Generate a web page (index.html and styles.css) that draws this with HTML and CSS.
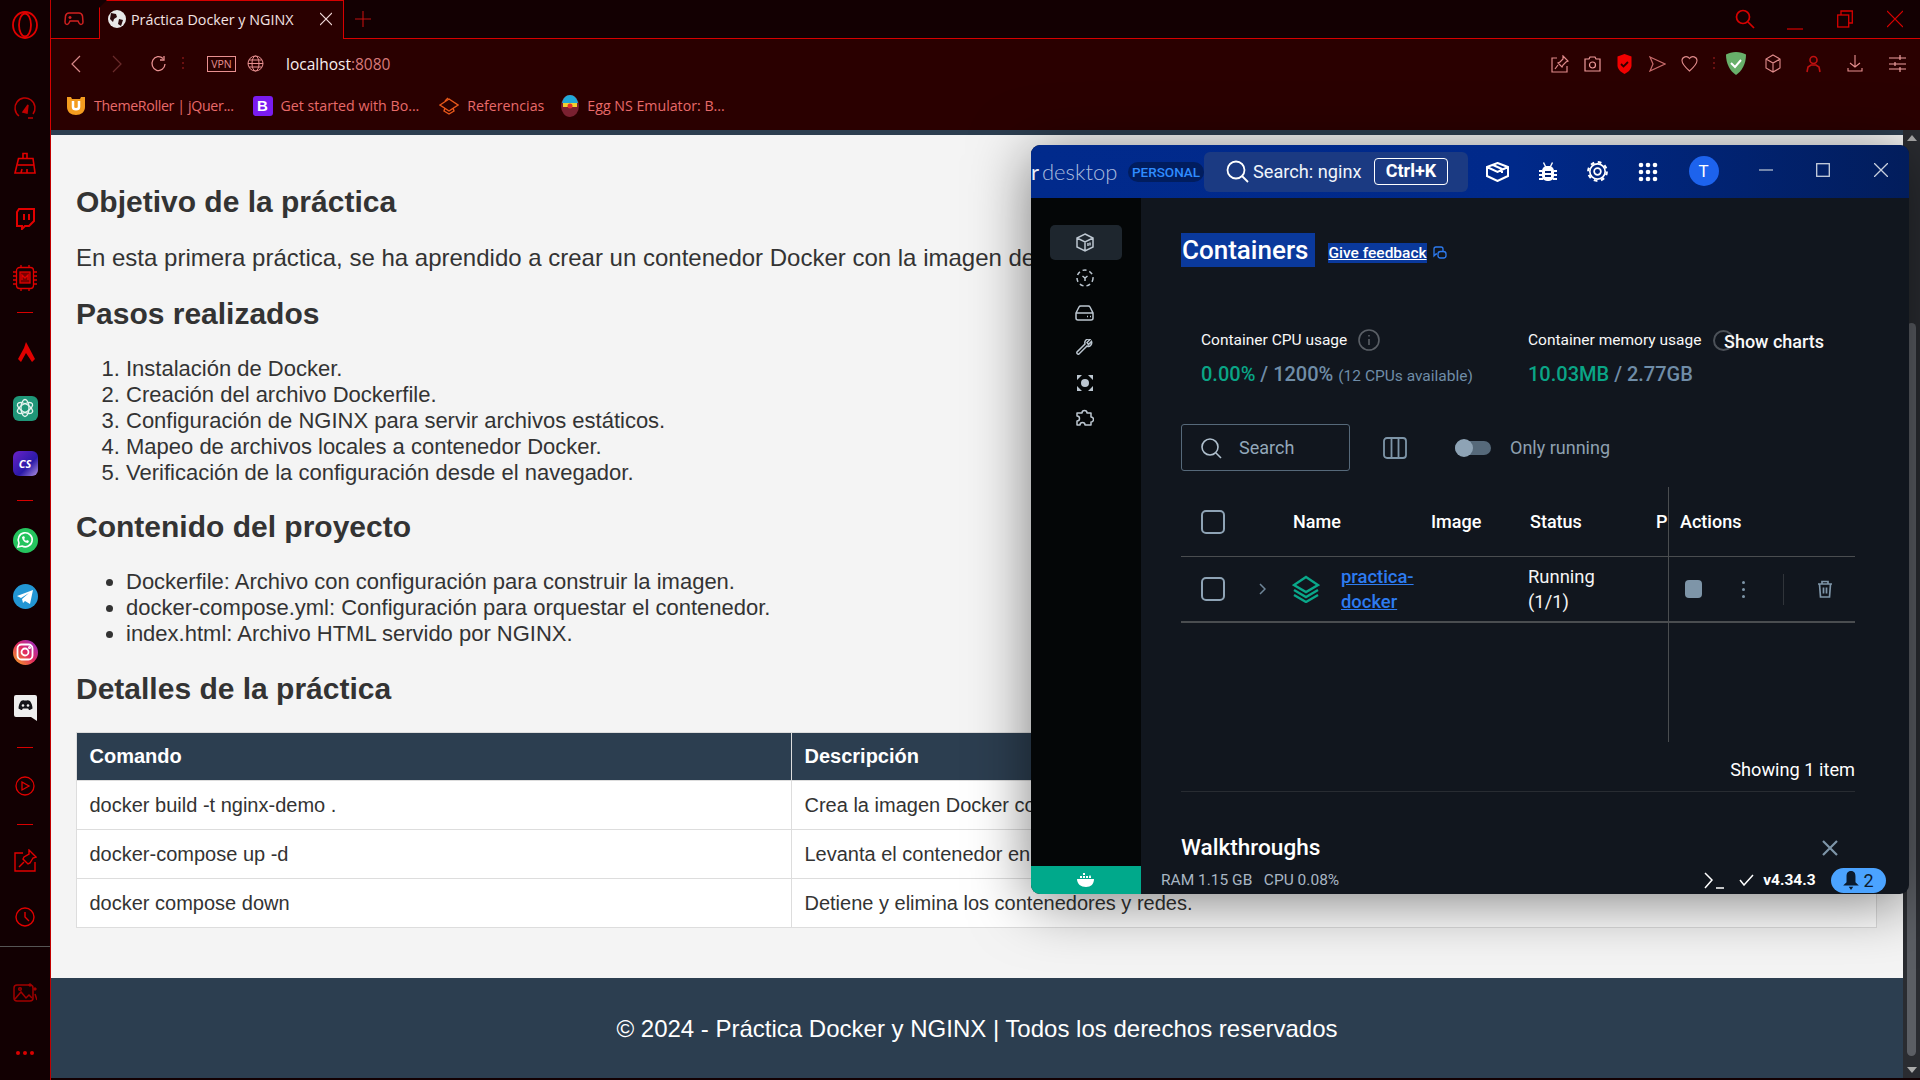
FILE: index.html
```html
<!DOCTYPE html>
<html lang="es">
<head>
<meta charset="utf-8">
<title>Práctica Docker y NGINX</title>
<link rel="stylesheet" href="styles.css">
</head>
<body>
<div class="browser">
  <aside class="rail">
    <div class="rail-logo"><svg width="30" height="32" viewBox="0 0 30 32" fill="none" stroke="#e00000" stroke-width="1.8"><ellipse cx="15" cy="16" rx="12" ry="13"/><ellipse cx="15" cy="16" rx="6" ry="11.5"/></svg></div>
    <div class="rail-item"><svg width="24" height="24" viewBox="0 0 24 24" fill="none" stroke="#c00000" stroke-width="1.5"><path d="M6 20a10 10 0 1 1 14-2"/><path d="M10 16l5-7-1 8z" fill="#c00000"/><path d="M15 22h5"/></svg></div>
    <div class="rail-item"><svg width="22" height="22" viewBox="0 0 22 22" fill="none" stroke="#e00000" stroke-width="1.6"><path d="M9 6V1.500h4V6"/><path d="M4.500 6.500h14.500l2 14.500H1z"/><path d="M3.500 13h16.500"/><path d="M7 21l1-4M13 21l0-4"/></svg></div>
    <div class="rail-item"><svg width="20" height="22" viewBox="0 0 20 22" fill="none" stroke="#e00000" stroke-width="2"><path d="M2 4l2-3h15v12l-5 5h-4l-3 3v-3H2z"/><path d="M9 6v6M14 6v6"/></svg></div>
    <div class="rail-item rail-item-cpu"><svg width="26" height="26" viewBox="0 0 26 26" fill="none" stroke="#e00000" stroke-width="1.3"><rect x="4.500" y="2.500" width="17" height="21" rx="3"/><rect x="8" y="7" width="10" height="11" fill="#7a0000"/><path d="M10 15v-5l3 3 3-3v5"/><path d="M1 7h3M1 11h3M1 15h3M1 19h3M22 7h3M22 11h3M22 15h3M22 19h3M9 0v2.500M17 0v2.500M9 24v2M17 24v2"/></svg></div>
    <div class="rail-sep"></div>
    <div class="rail-item"><svg width="20" height="21" viewBox="0 0 20 21" fill="#e00000"><path d="M11 0l9 17-3 3-6-9-5 9-3-3 6-11z"/></svg></div>
    <div class="rail-item"><div class="app app-gpt"><svg width="20" height="20" viewBox="0 0 20 20" fill="none" stroke="#e8f4f0" stroke-width="1.300"><ellipse cx="10" cy="10" rx="4" ry="8.500"/><ellipse cx="10" cy="10" rx="4" ry="8.500" transform="rotate(60 10 10)"/><ellipse cx="10" cy="10" rx="4" ry="8.500" transform="rotate(120 10 10)"/></svg></div></div>
    <div class="rail-item"><div class="app app-cs"><span>CS</span></div></div>
    <div class="rail-sep rail-sep-2"></div>
    <div class="rail-item"><div class="app app-wa"><svg width="18" height="18" viewBox="0 0 18 18" fill="none" stroke="#fff" stroke-width="1.6"><path d="M2 16l1-4a7 7 0 1 1 3 3z"/><path d="M6 6c0 3 3 6 6 6l1-2-2-1-1 1-2-2 1-1-1-2z" fill="#fff" stroke="none"/></svg></div></div>
    <div class="rail-item rail-item-tg"><div class="app app-tg"><svg width="18" height="16" viewBox="0 0 18 16" fill="#fff"><path d="M1 7L17 1l-3 14-5-3-2 2-1-4 7-6-8 5z"/></svg></div></div>
    <div class="rail-item"><div class="app app-ig"><svg width="18" height="18" viewBox="0 0 18 18" fill="none" stroke="#fff" stroke-width="1.8"><rect x="1.500" y="1.500" width="15" height="15" rx="4"/><circle cx="9" cy="9" r="3.500"/><circle cx="13.500" cy="4.500" r=".6"/></svg></div></div>
    <div class="rail-item"><svg width="23" height="26" viewBox="0 0 23 26"><path d="M2 0h19a2 2 0 0 1 2 2v24l-6-4H2a2 2 0 0 1-2-2V2a2 2 0 0 1 2-2z" fill="#eee"/><path d="M7 6c1.500-.8 2.500-.8 3-.4h3c.5-.4 1.500-.4 3 .4 1.800 2.500 2.500 5 2.500 7.500-1 .9-2.500 1.500-3.500 1.500l-.8-1.500H8.800L8 15c-1 0-2.500-.6-3.500-1.500C4.500 11 5.200 8.500 7 6z" fill="#14151a"/><circle cx="9" cy="10.500" r="1.300" fill="#eee"/><circle cx="14" cy="10.500" r="1.300" fill="#eee"/></svg></div>
    <div class="rail-sep rail-sep-mid"></div>
    <div class="rail-item"><svg width="20" height="20" viewBox="0 0 20 20" fill="none" stroke="#e00000" stroke-width="1.300"><circle cx="10" cy="10" r="9"/><path d="M7 6l7 4-7 4z"/></svg></div>
    <div class="rail-sep rail-sep-3"></div>
    <div class="rail-item"><svg width="24" height="24" viewBox="0 0 24 24" fill="none" stroke="#e00000" stroke-width="1.400"><path d="M10 4H2v18h20v-9"/><path d="M16 1l7 7-3 1-3 5-2 1-5-5 1-2 5-3z"/><path d="M11 13l-5 5"/></svg></div>
    <div class="rail-item rail-item-clock"><svg width="20" height="20" viewBox="0 0 20 20" fill="none" stroke="#e00000" stroke-width="1.400"><circle cx="10" cy="10" r="9"/><path d="M10 5v5l4 4"/></svg></div>
    <div class="rail-line"></div>
    <div class="rail-item rail-item-image"><svg width="24" height="20" viewBox="0 0 24 20" fill="none" stroke="#a00000" stroke-width="1.500"><rect x="1" y="3" width="19" height="16" rx="3"/><path d="M2 17l6-7 5 6 3-3 3 3M22 12l2 6"/><circle cx="7" cy="7" r="1.300"/><path d="M17 2l1 1-1 1-1-1zM22 6l1 1-1 1-1-1z" fill="#a00000"/></svg></div>
    <div class="rail-dots"><i></i><i></i><i></i></div>
  </aside>

  <div class="shell">
    <div class="tabstrip">
      <span class="strip-game"><svg width="20" height="16" viewBox="0 0 20 16" fill="none" stroke="#d02020" stroke-width="1.500"><path d="M5 2h10c2 0 3 1 3.500 3l.5 6c0 3-3 3-4 1l-1-2H6l-1 2c-1 2-4 2-4-1l.5-6C2 3 3 2 5 2z"/><path d="M6 5v3M4.500 6.500h3"/></svg></span>
      <div class="tab">
        <svg class="tab-fav" width="18" height="18" viewBox="0 0 18 18"><circle cx="9" cy="9" r="9" fill="#e8e8e8"/><path d="M3 3l5 1 1 3-3 2-1 3-3-3zM11 9l4 1-2 6-3-2z" fill="#2a0a0c"/></svg>
        <span class="tab-title">Práctica Docker y NGINX</span>
        <svg class="tab-close" width="12" height="14" viewBox="0 0 12 14" stroke="#f0d8d8" stroke-width="1.100"><path d="M0 1l12 12M12 1L0 13"/></svg>
      </div>
      <svg class="tab-new" width="16" height="16" viewBox="0 0 16 16" stroke="#c01010" stroke-width="1.100"><path d="M8 0v16M0 8h16"/></svg>
      <div class="strip-controls">
        <svg class="ctl-search" width="20" height="20" viewBox="0 0 20 20" fill="none" stroke="#d80000" stroke-width="1.700"><circle cx="8" cy="8" r="6.500"/><path d="M13 13l6 6"/></svg>
        <svg class="ctl-min" width="16" height="14" viewBox="0 0 16 14" stroke="#d80000" stroke-width="1.200"><path d="M0 13h16"/></svg>
        <svg width="16" height="18" viewBox="0 0 16 18" fill="none" stroke="#d80000" stroke-width="1.300"><rect x=".7" y="5" width="11" height="12"/><path d="M4 5V1h11.300v12H12"/></svg>
        <svg width="16" height="18" viewBox="0 0 16 18" stroke="#d80000" stroke-width="1.200"><path d="M0 1l16 16M16 1L0 17"/></svg>
      </div>
    </div>
    <div class="toolbar">
      <div class="addr">
        <svg class="nav nav-back" width="10" height="18" viewBox="0 0 10 18" fill="none" stroke="#d88888" stroke-width="1.200"><path d="M9 1L1 9l8 8"/></svg>
        <svg class="nav nav-fwd" width="10" height="18" viewBox="0 0 10 18" fill="none" stroke="#6a2a2a" stroke-width="1.200"><path d="M1 1l8 8-8 8"/></svg>
        <svg class="nav nav-reload" width="17" height="18" viewBox="0 0 17 18" fill="none" stroke="#e89090" stroke-width="1.300"><path d="M15 9a6.500 7 0 1 1-2-5.500"/><path d="M14 1v4h-4" /></svg>
        <span class="nav-dots"></span>
        <span class="vpn">VPN</span>
        <svg class="globe" width="17" height="17" viewBox="0 0 17 17" fill="none" stroke="#e89090" stroke-width="1"><circle cx="8.500" cy="8.500" r="7.500"/><ellipse cx="8.500" cy="8.500" rx="3.500" ry="7.500"/><path d="M1 8.500h15M2 5h13M2 12h13"/></svg>
        <span class="url">localhost<em>:8080</em></span>
        <div class="tools">
          <svg width="18" height="18" viewBox="0 0 18 18" fill="none" stroke="#e08a8a" stroke-width="1.200"><path d="M6 3H1v14h15v-6"/><path d="M12 1l5 5-2 1-3 3-1 2-4-4 2-1 3-3zM7 10l-3 4"/></svg>
          <svg width="17" height="16" viewBox="0 0 17 16" fill="none" stroke="#f09a9a" stroke-width="1.200"><path d="M1 3h4l1-2h5l1 2h4v12H1z"/><circle cx="8.500" cy="9" r="3"/></svg>
          <svg class="tool-shield" width="15" height="20" viewBox="0 0 15 20"><path d="M7.500 0l7 2.500v9c0 4-4 7-7 8.500-3-1.500-7-4.500-7-8.500v-9z" fill="#f20000"/><path d="M4 10l2.500 2.500L11 8" fill="none" stroke="#300" stroke-width="1.800"/></svg>
          <svg class="tool-send" width="17" height="16" viewBox="0 0 17 16" fill="none" stroke="#c86a6a" stroke-width="1.200"><path d="M1 1l15 7-15 7 3-7z"/></svg>
          <svg width="17" height="17" viewBox="0 0 17 17" fill="none" stroke="#e08a8a" stroke-width="1.100"><path d="M8.500 16C4 12 1 9 1 5.500 1 2 6 0 8.500 3.500 11 0 16 2 16 5.500 16 9 13 12 8.500 16z"/></svg>
          <span class="tool-dots"></span>
          <svg class="tool-adguard" width="20" height="23" viewBox="0 0 20 23"><path d="M10 0c4 0 7 1 10 2.500C20 12 16 19 10 23 4 19 0 12 0 2.500 3 1 6 0 10 0z" fill="#68b06a"/><path d="M5 11l4 4 6-7" fill="none" stroke="#fff" stroke-width="2"/></svg>
          <svg class="tool-cube" width="16" height="19" viewBox="0 0 16 19" fill="none" stroke="#e08a8a" stroke-width="1.100"><path d="M8 1l7 4v9l-7 4-7-4V5zM1 5l7 4 7-4M8 9v9"/></svg>
          <svg class="tool-user" width="15" height="18" viewBox="0 0 15 18" fill="none" stroke="#c01010" stroke-width="1.600"><circle cx="7.500" cy="5" r="3.500"/><path d="M1 17l1-5 3-2h5l3 2 1 5"/></svg>
          <svg class="tool-wide" width="16" height="17" viewBox="0 0 16 17" fill="none" stroke="#e89090" stroke-width="1.100"><path d="M8 0v12M3 8l5 4 5-4M1 13v3h14v-3"/></svg>
          <svg class="tool-wide" width="17" height="17" viewBox="0 0 17 17" fill="none" stroke="#f0a0a0" stroke-width="1.200"><path d="M0 3h17M0 9h17M0 14h17M11 0v5M6 7v4M11 12v5"/></svg>
        </div>
      </div>
      <div class="bookmarks">
        <span class="bm bm-1"><svg width="20" height="20" viewBox="0 0 20 20"><path d="M1 1h4l1 2h8l1-2h4v10c0 5-4 8-9 8s-9-3-9-8z" fill="#f39c1f"/><path d="M7 5v6c0 3 6 3 6 0V5" fill="none" stroke="#fff" stroke-width="2.500"/></svg><span class="bm-text">ThemeRoller | jQuer...</span></span>
        <span class="bm bm-2"><span class="bm-b">B</span><span class="bm-text">Get started with Bo...</span></span>
        <span class="bm bm-3"><svg width="20" height="20" viewBox="0 0 20 20" fill="none" stroke="#e8581a" stroke-width="1.400"><path d="M1 9l9-6 9 6-9 6z"/><path d="M9 2l-3 3M6 12l-1 3 5 3 5-3-1-3"/></svg><span class="bm-text">Referencias</span></span>
        <span class="bm bm-4"><svg width="18" height="22" viewBox="0 0 18 22"><ellipse cx="9" cy="11" rx="9" ry="11" fill="#7a2030"/><path d="M1 8C2 3 5 0 9 0s7 3 8 8z" fill="#20a8d8"/><rect x="2" y="8" width="14" height="4" fill="#f0d030"/><circle cx="9" cy="11" r="2.500" fill="#e03030"/></svg><span class="bm-text">Egg NS Emulator: B...</span></span>
      </div>
    </div>
    <div class="viewport">
      <main class="page">
        <div class="page-strip"></div>
        <section class="article">
          <h2>Objetivo de la práctica</h2>
          <p>En esta primera práctica, se ha aprendido a crear un contenedor Docker con la imagen de NGINX.</p>
          <h2>Pasos realizados</h2>
          <ol>
            <li>Instalación de Docker.</li>
            <li>Creación del archivo Dockerfile.</li>
            <li>Configuración de NGINX para servir archivos estáticos.</li>
            <li>Mapeo de archivos locales a contenedor Docker.</li>
            <li>Verificación de la configuración desde el navegador.</li>
          </ol>
          <h2>Contenido del proyecto</h2>
          <ul>
            <li>Dockerfile: Archivo con configuración para construir la imagen.</li>
            <li>docker-compose.yml: Configuración para orquestar el contenedor.</li>
            <li>index.html: Archivo HTML servido por NGINX.</li>
          </ul>
          <h2>Detalles de la práctica</h2>
          <table>
            <thead><tr><th class="col-cmd">Comando</th><th>Descripción</th></tr></thead>
            <tbody>
              <tr><td>docker build -t nginx-demo .</td><td>Crea la imagen Docker con NGINX.</td></tr>
              <tr><td>docker-compose up -d</td><td>Levanta el contenedor en segundo plano.</td></tr>
              <tr><td>docker compose down</td><td>Detiene y elimina los contenedores y redes.</td></tr>
            </tbody>
          </table>
        </section>
        <footer class="page-footer">© 2024 - Práctica Docker y NGINX | Todos los derechos reservados</footer>
      </main>
      <div class="scrollbar">
        <svg class="sb-arrow" width="10" height="6" viewBox="0 0 10 6" fill="#aaa"><path d="M5 0l5 6H0z"/></svg>
        <div class="sb-thumb"></div>
        <svg class="sb-arrow" width="10" height="6" viewBox="0 0 10 6" fill="#aaa"><path d="M5 6l5-6H0z"/></svg>
      </div>
    </div>
  </div>

  <div class="dd-window">
    <header class="dd-head">
      <span class="dd-logo"><b>r</b> desktop</span>
      <span class="dd-plan">PERSONAL</span>
      <div class="dd-search">
        <svg width="23" height="23" viewBox="0 0 23 23" fill="none" stroke="#fff" stroke-width="1.800"><circle cx="10" cy="10" r="8.500"/><path d="M16 16l6 6"/></svg>
        <span class="dd-search-text">Search: nginx</span>
        <span class="dd-kbd">Ctrl+K</span>
      </div>
      <div class="dd-head-icons">
        <svg width="23" height="20" viewBox="0 0 23 20" fill="none" stroke="#fff" stroke-width="2"><path d="M11.500 1L22 5v9l-10.500 5L1 14V5zM1 5l10.500 5L22 5M7 3l9 4v4"/></svg>
        <svg width="18" height="20" viewBox="0 0 18 20" fill="#fff"><rect x="3" y="4" width="12" height="15" rx="5"/><path d="M5 0l2 4h4l2-4 1 1-2 4H6L4 1zM0 8h3v2H0zM15 8h3v2h-3zM0 12h3v2H0zM15 12h3v2h-3zM0 16h4v2H0zM14 16h4v2h-4z"/><path d="M6 9h6v2H6zM6 13h6v2H6z" fill="#02226e"/></svg>
        <svg width="23" height="23" viewBox="0 0 24 24" fill="none" stroke="#fff"><circle cx="12" cy="12" r="3.500" stroke-width="1.800"/><circle cx="12" cy="12" r="8" stroke-width="1.700"/><circle cx="12" cy="12" r="9.700" stroke-width="2.300" stroke-dasharray="3.810 3.810"/></svg>
        <svg class="dd-ic-grid" width="20" height="20" viewBox="0 0 20 20" fill="#fff"><circle cx="3" cy="3" r="2.300"/><circle cx="10" cy="3" r="2.300"/><circle cx="17" cy="3" r="2.300"/><circle cx="3" cy="10" r="2.300"/><circle cx="10" cy="10" r="2.300"/><circle cx="17" cy="10" r="2.300"/><circle cx="3" cy="17" r="2.300"/><circle cx="10" cy="17" r="2.300"/><circle cx="17" cy="17" r="2.300"/></svg>
        <span class="dd-avatar">T</span>
      </div>
      <div class="dd-win">
        <svg width="14" height="14" viewBox="0 0 14 14" stroke="#9aa8c0" stroke-width="1.400"><path d="M0 7h14"/></svg>
        <svg width="14" height="14" viewBox="0 0 14 14" fill="none" stroke="#c8d0de" stroke-width="1.300"><rect x=".7" y=".7" width="12.600" height="12.600"/></svg>
        <svg class="dd-win-close" width="14" height="14" viewBox="0 0 14 14" stroke="#c8d0de" stroke-width="1.300"><path d="M0 0l14 14M14 0L0 14"/></svg>
      </div>
    </header>
    <div class="dd-body">
      <nav class="dd-nav">
        <a class="dd-nav-item is-active"><svg width="18" height="19" viewBox="0 0 18 19" fill="none" stroke="#bcc6d0" stroke-width="1.500"><path d="M9 1l8 4v9l-8 4-8-4V5zM1 5l8 4 8-4M9 9v9"/><path d="M12 10v3M14 9.500v3" /></svg></a>
        <a class="dd-nav-item"><svg width="18" height="18" viewBox="0 0 18 18" fill="none" stroke="#bcc6d0" stroke-width="1.500"><circle cx="9" cy="9" r="8" stroke-dasharray="4 3"/><path d="M6.500 7L9 9l2.500-2M9 9v3"/></svg></a>
        <a class="dd-nav-item"><svg width="19" height="16" viewBox="0 0 19 16" fill="none" stroke="#bcc6d0" stroke-width="1.500"><path d="M1 8l3-6a2 2 0 0 1 2-1h7a2 2 0 0 1 2 1l3 6v5a2 2 0 0 1-2 2H3a2 2 0 0 1-2-2zM1 8h17"/><path d="M12 11.500h1M15 11.500h1"/></svg></a>
        <a class="dd-nav-item"><svg width="18" height="18" viewBox="0 0 18 18" fill="none" stroke="#bcc6d0" stroke-width="1.500"><path d="M11 7l-8 8a1.500 1.500 0 0 1-2-2l8-8c-1-3 2-6 5-4.500l-3 3 1.500 2 3-3c1 3-2 6-4.500 4.500z"/></svg></a>
        <a class="dd-nav-item"><svg width="18" height="18" viewBox="0 0 18 18" fill="#bcc6d0"><circle cx="9" cy="9" r="4"/><path d="M1 1h5L1 6zM17 1h-5l5 5zM1 17h5l-5-5zM17 17h-5l5-5z"/></svg></a>
        <a class="dd-nav-item"><svg width="19" height="18" viewBox="0 0 19 18" fill="none" stroke="#bcc6d0" stroke-width="1.500" stroke-linejoin="round"><path d="M7 4a2.500 2.500 0 1 1 5 0h4v4a2.500 2.500 0 1 1 0 5v3H10a2.500 2.500 0 1 0-5 0H2v-4a2.500 2.500 0 1 0 0-5V4z"/></svg></a>
      </nav>
      <section class="dd-main">
        <div class="dd-title-row">
          <h1 class="dd-title">Containers</h1>
          <a class="dd-feedback">Give feedback</a>
          <svg width="14" height="14" viewBox="0 0 14 14" fill="none" stroke="#2d7bf0" stroke-width="1.300"><path d="M1 3a2 2 0 0 1 2-2h5a2 2 0 0 1 2 2v2M4 8H3L1 10V3"/><rect x="5" y="5.500" width="8" height="6.500" rx="2.500"/></svg>
        </div>
        <div class="dd-stats">
          <div class="dd-stat dd-stat-cpu">
            <div class="dd-stat-label">Container CPU usage <svg class="dd-info" width="22" height="22" viewBox="0 0 22 22" fill="none" stroke="#5a5f66" stroke-width="1.600"><circle cx="11" cy="11" r="10"/><path d="M11 10v6M11 6v1.500"/></svg></div>
            <div class="dd-stat-val"><b>0.00%</b> / 1200% <small>(12 CPUs available)</small></div>
          </div>
          <div class="dd-stat dd-stat-mem">
            <div class="dd-stat-label">Container memory usage <span class="dd-ring"></span><span class="dd-show">Show charts</span></div>
            <div class="dd-stat-val"><b>10.03MB</b> / 2.77GB</div>
          </div>
        </div>
        <div class="dd-filter">
          <div class="dd-input"><svg width="22" height="22" viewBox="0 0 22 22" fill="none" stroke="#b0c0ce" stroke-width="1.600"><circle cx="10" cy="10" r="8"/><path d="M16 16l5 5"/></svg><span>Search</span></div>
          <svg class="dd-cols" width="24" height="24" viewBox="0 0 24 24" fill="none" stroke="#7e95a8" stroke-width="1.800"><rect x="1" y="2" width="22" height="20" rx="3"/><path d="M8.500 2v20M15.500 2v20"/></svg>
          <span class="dd-toggle"><i></i></span>
          <span class="dd-only">Only running</span>
        </div>
        <div class="dd-table">
          <div class="dd-thead">
            <span class="dd-check"></span>
            <span class="th th-name">Name</span>
            <span class="th th-image">Image</span>
            <span class="th th-status">Status</span>
            <span class="th th-port">P</span>
            <span class="th">Actions</span>
          </div>
          <div class="dd-row">
            <span class="dd-check"></span>
            <svg class="dd-chev" width="7" height="12" viewBox="0 0 7 12" fill="none" stroke="#6f8699" stroke-width="1.500"><path d="M1 1l5 5-5 5"/></svg>
            <svg class="dd-stack" width="28" height="28" viewBox="0 0 28 28" fill="none" stroke="#0aa88a" stroke-width="2.400"><path d="M14 2l12 8-12 7-12-7z"/><path d="M2 15l12 7 12-7"/><path d="M2 20l12 7 12-7"/></svg>
            <a class="dd-name">practica-<br>docker</a>
            <span class="dd-status">Running<br>(1/1)</span>
            <span class="dd-stop"></span>
            <span class="dd-kebab"><i></i><i></i><i></i></span>
            <span class="dd-vsep"></span>
            <svg class="dd-trash" width="16" height="18" viewBox="0 0 16 18" fill="none" stroke="#7e95a8" stroke-width="1.700"><path d="M1 4h14M5 4V1.500h6V4M2.500 4l1 13h9l1-13M6.500 7.500v6M9.500 7.500v6"/></svg>
          </div>
          <span class="dd-vline"></span>
        </div>
        <div class="dd-count">Showing 1 item</div>
        <div class="dd-walk"><span class="dd-walk-title">Walkthroughs</span><svg width="16" height="16" viewBox="0 0 16 16" stroke="#7e95a8" stroke-width="2.200"><path d="M1 1l14 14M15 1L1 15"/></svg></div>
      </section>
    </div>
    <footer class="dd-foot">
      <span class="dd-whale"><svg width="18" height="16" viewBox="0 0 18 16" fill="#fff"><path d="M6 1h2v2H6zM3 4h2v2H3zM6 4h2v2H6zM9 4h2v2H9zM0 7h17c0 5-3 8-8 8-5 0-9-3-9-8z"/><path d="M13 3c1 1 1 2 1 3h-2c0-1 0-2 1-3z"/></svg></span>
      <span class="dd-res">RAM 1.15 GB&nbsp;&nbsp; CPU 0.08%</span>
      <svg class="dd-term" width="20" height="17" viewBox="0 0 20 17" fill="none" stroke="#fff" stroke-width="1.500"><path d="M1 1l7 7-7 8M12 16h8"/></svg>
      <svg class="dd-tick" width="15" height="12" viewBox="0 0 15 12" fill="none" stroke="#fff" stroke-width="1.500"><path d="M1 6l4 5L14 1"/></svg>
      <span class="dd-ver">v4.34.3</span>
      <span class="dd-bell"><svg width="16" height="19" viewBox="0 0 14 17" fill="#0b1b2e"><path d="M7 0c3 0 4 2 4 5v5l3 3H0l3-3V5c0-3 1-5 4-5zM5 14h4l-2 3z"/></svg><span>2</span></span>
    </footer>
  </div>
</div>
</body>
</html>
```
FILE: styles.css
```css
* { box-sizing: border-box; }
html, body { margin: 0; height: 100%; overflow: hidden; }
body { background: #120002; font-family: "Liberation Sans", Arial, sans-serif; }

.browser { position: relative; display: flex; width: 1920px; height: 1080px; }

/* left rail */
.rail { width: 51px; flex: none; display: flex; flex-direction: column; align-items: center; background: #120002; border-right: 1px solid #c00000; padding-top: 9px; }
.rail-logo { height: 71px; }
.rail-item { height: 55.500px; flex: none; display: flex; align-items: center; justify-content: center; }
.rail-item-cpu { margin-top: 4px; }
.rail-item-tg { margin-top: 1px; }
.rail-item-clock { margin-top: 1px; }
.rail-item-image { margin-top: 17px; }
.rail-sep { flex: none; width: 16px; height: 1px; background: #d80000; margin: 6px 0 12px; }
.rail-sep-2 { margin-top: 8px; }
.rail-sep-mid { margin: 11px 0 11px; }
.rail-sep-3 { margin: 10px 0 8px; }
.rail-line { flex: none; width: 50px; height: 1px; background: #555; margin-top: 1px; }
.rail-dots { margin-top: 31px; display: flex; gap: 3px; }
.rail-dots i { width: 4px; height: 4px; border-radius: 50%; background: #d80000; }
.app { width: 25px; height: 25px; border-radius: 50%; display: flex; align-items: center; justify-content: center; }
.app-gpt { background: #1f9678; border-radius: 6px; }
.app-cs { background: linear-gradient(135deg, #6a22c8, #2a1aa8 60%, #b090e0); border-radius: 6px; color: #fff; font: italic 700 11px "Open Sans", sans-serif; }
.app-wa { background: #25c45e; }
.app-tg { background: #2296d4; }
.app-ig { background: linear-gradient(45deg, #f8b020, #e02a60 50%, #9030d0); }

.shell { flex: 1; min-width: 0; display: flex; flex-direction: column; padding-bottom: 2px; }

/* tab strip */
.tabstrip { height: 38px; flex: none; display: flex; align-items: flex-start; background: #130002; position: relative; z-index: 1; }
.strip-game { margin: 11px 0 0 13px; width: 35px; }
.tab { margin-top: 0; width: 245px; height: 39px; background: #2a0000; border: 1px solid #d80000; border-bottom: 0; clip-path: polygon(8px 0, 100% 0, 100% 100%, 0 100%, 0 8px); display: flex; align-items: center; padding: 0 0 2px 8px; }
.tab-title { margin-left: 5px; color: #f4e4e4; font: 14.300px "Open Sans", sans-serif; white-space: nowrap; width: 189px; }
.tab-close { flex: none; margin-left: 0; }
.tab-new { margin: 11px 0 0 11px; }
.strip-controls { margin-left: auto; display: flex; align-items: center; gap: 34px; padding: 8px 17px 0 0; }
.ctl-search { margin-right: -2px; }
.ctl-min { margin-top: 8px; }

/* toolbar */
.toolbar { height: 92px; flex: none; background: #2a0000; border-top: 1px solid #d80000; border-left: 1px solid #d80000; margin-left: -1px; }
.addr { height: 49px; display: flex; align-items: center; padding-left: 20px; }
.nav { flex: none; }
.nav-fwd { margin-left: 31px; }
.nav-reload { margin-left: 28px; }
.nav-dots { width: 2px; height: 13px; margin-left: 15px; background: repeating-linear-gradient(#6a1010 0 2px, transparent 2px 5px); }
.vpn { margin-left: 23px; width: 29px; height: 16px; border: 1px solid #e89090; color: #e89090; font: 10.500px/14px "Open Sans", sans-serif; text-align: center; }
.globe { margin-left: 11px; }
.url { margin-left: 22px; color: #f8efef; font: 15.500px "Open Sans", sans-serif; }
.url em { font-style: normal; color: #d87a7a; }
.tools { margin-left: auto; display: flex; align-items: center; gap: 15px; padding-right: 14px; }
.tool-dots { width: 2px; height: 14px; background: repeating-linear-gradient(#6a1010 0 2px, transparent 2px 5px); }
.tool-shield { margin-left: 1px; }
.tool-send { margin-left: 2px; }
.tool-adguard { margin-left: -4px; margin-right: 2px; }
.tool-cube { margin-left: 2px; }
.tool-user { margin-left: 10px; }
.tool-wide { margin-left: 11px; }
.bookmarks { height: 40px; display: flex; align-items: center; padding-left: 15px; padding-bottom: 5px; color: #e86a6a; font: 14.200px "Open Sans", sans-serif; }
.bm { display: flex; align-items: center; gap: 8px; white-space: nowrap; }
.bm-1 .bm-text { letter-spacing: -.35px; }
.bm-2 { margin-left: 19px; }
.bm-3 { margin-left: 20px; }
.bm-4 { margin-left: 17px; }
.bm-b { width: 20px; height: 20px; border-radius: 3px; background: #7a1cf0; color: #fff; font: 700 15px/20px "Liberation Sans", sans-serif; text-align: center; }

/* viewport */
.viewport { flex: 1; min-height: 0; display: flex; background: #f4f4f4; }
.page { flex: 1; min-width: 0; display: flex; flex-direction: column; background: #f4f4f4; color: #333; font-size: 22px; }
.page-strip { height: 5px; flex: none; background: #2c3e50; }
.article { flex: 1; padding: 0 26px 0 25px; }
.article h2 { margin: 0; font-size: 30px; line-height: 36px; color: #333; }
.article h2:nth-of-type(1) { margin-top: 49px; }
.article p { margin: 25px 0 0; font-size: 24px; line-height: 26px; }
.article p + h2 { margin-top: 25px; }
.article ol, .article ul { margin: 23.500px 0 0; padding-left: 50px; line-height: 26px; }
.article ol + h2 { margin-top: 23.500px; }
.article ul + h2 { margin-top: 24.500px; }
.article table { margin-top: 25px; width: 100%; border-collapse: collapse; background: #fff; table-layout: fixed; font-size: 20px; }
.article th { background: #2c3e50; color: #fff; text-align: left; font-weight: 700; height: 48px; padding: 0 12.500px; border: 1px solid #ddd; }
.article td { height: 49px; padding: 0 12.500px; border: 1px solid #ddd; }
.col-cmd { width: 715px; }
.page-footer { height: 100px; flex: none; padding-top: 2px; background: #2c3e50; color: #fff; display: flex; align-items: center; justify-content: center; font-size: 24px; }

.scrollbar { width: 17px; flex: none; background: #2a2c31; display: flex; flex-direction: column; align-items: center; justify-content: space-between; padding: 5px 0; }
.sb-thumb { flex: none; width: 9px; height: 733px; margin-top: 174px; margin-bottom: 4px; background: #5b5e64; border-radius: 5px; }

/* docker desktop window */
.dd-window { position: absolute; left: 1031px; top: 145px; width: 878px; height: 749px; display: flex; flex-direction: column; background: #11161e; border-radius: 9px; overflow: hidden; box-shadow: 0 8px 60px rgba(0,0,0,.5); color: #fff; font-family: Roboto, sans-serif; }
.dd-head { height: 53px; flex: none; display: flex; align-items: center; background: linear-gradient(90deg, #012a8c, #00298a 55%, #021d5c); }
.dd-logo { width: 97px; font: 300 22px Lato, sans-serif; color: #a9bbdd; white-space: nowrap; word-spacing: -3px; }
.dd-logo b { font-weight: 400; color: #e8eef8; }
.dd-plan { width: 76px; height: 20px; border-radius: 10px; background: #011d5e; color: #2f8cff; font-size: 13.500px; font-weight: 500; line-height: 20px; text-align: center; }
.dd-search { width: 264px; height: 40px; border-radius: 6px; background: #1b3a82; display: flex; align-items: center; padding-left: 22px; }
.dd-search-text { margin-left: 4px; font-size: 18.200px; color: #f0f4fa; width: 121px; white-space: nowrap; }
.dd-kbd { width: 74px; height: 27px; border: 1.500px solid #fff; border-radius: 4px; font-weight: 700; font-size: 18px; line-height: 24px; text-align: center; }
.dd-head-icons { margin-left: 18px; display: flex; align-items: center; gap: 29.500px; }
.dd-ic-grid { margin-left: -1px; }
.dd-avatar { width: 30px; height: 30px; border-radius: 50%; background: #1d63ed; font-size: 17px; line-height: 30px; text-align: center; margin: 0 0 2px 1.500px; }
.dd-win { margin-left: auto; display: flex; align-items: center; gap: 43px; padding: 0 21px 3px 0; }
.dd-win-close { margin-left: 1px; }
.dd-body { flex: 1; min-height: 0; display: flex; }
.dd-nav { width: 110px; flex: none; background: #040607; padding: 27px 19px 0; display: flex; flex-direction: column; }
.dd-nav-item { height: 35px; flex: none; display: flex; align-items: center; justify-content: center; border-radius: 5px; padding-right: 3px; }
.dd-nav-item.is-active { background: #1e262e; }
.dd-main { flex: 1; min-width: 0; padding: 35px 54px 0 40px; overflow: hidden; }
.dd-title-row { display: flex; align-items: center; height: 34px; }
.dd-title { margin: 0; padding: 0 7px 0 1px; height: 34px; background: #0a399c; font-size: 26px; font-weight: 500; line-height: 34px; }
.dd-feedback { margin: 6px 6px 0 13px; background: #0a399c; color: #fff; text-decoration: underline; font-size: 15.500px; font-weight: 500; line-height: 20px; }
.dd-title-row svg { margin-top: 6px; }
.dd-stats { display: flex; margin-top: 62px; padding-left: 20px; }
.dd-stat-cpu { width: 327px; }
.dd-stat-label { display: flex; align-items: center; height: 22px; font-size: 15.500px; font-weight: 400; color: #f8f8f8; position: relative; }
.dd-info { margin-left: 11px; }
.dd-ring { width: 21px; height: 21px; border-radius: 50%; border: 2px solid #4c5158; margin-left: 12px; }
.dd-show { position: absolute; left: 196px; font-size: 18px; font-weight: 500; top: 2px; white-space: nowrap; }
.dd-stat-val { margin-top: 11px; font-size: 20px; font-weight: 500; color: #6f8da8; white-space: nowrap; }
.dd-stat-val b { color: #0aa586; font-weight: 500; }
.dd-stat-val small { font-size: 15.500px; font-weight: 400; }
.dd-filter { margin-top: 38px; display: flex; align-items: center; }
.dd-input { width: 169px; height: 47px; border: 1px solid #56697a; border-radius: 3px; display: flex; align-items: center; gap: 17px; padding-left: 18px; color: #93a8ba; font-size: 18px; }
.dd-cols { margin-left: 33px; }
.dd-toggle { position: relative; margin-left: 48px; width: 36px; height: 14px; border-radius: 7px; background: #56697a; }
.dd-toggle i { position: absolute; left: 0; top: -2px; width: 18px; height: 18px; border-radius: 50%; background: #8ea3b5; }
.dd-only { margin-left: 19px; font-size: 18px; color: #8ea0b0; }
.dd-table { position: relative; margin-top: 16px; height: 255px; }
.dd-thead { height: 70px; display: flex; align-items: center; padding-left: 20px; border-bottom: 1px solid #4a4d50; }
.th { font-size: 18px; font-weight: 500; white-space: nowrap; }
.th-name { margin-left: 68px; width: 138px; }
.th-image { width: 99px; }
.th-status { width: 126px; }
.th-port { width: 24px; }
.dd-check { flex: none; width: 24px; height: 24px; border: 2px solid #8ea3b5; border-radius: 5px; }
.dd-row { height: 66px; display: flex; align-items: center; padding-left: 20px; border-bottom: 2px solid #4a4d50; }
.dd-chev { margin-left: 34px; flex: none; }
.dd-stack { margin-left: 26px; flex: none; }
.dd-name { margin-left: 21px; width: 187px; color: #2d7bf0; text-decoration: underline; font-size: 18.400px; font-weight: 500; line-height: 25px; }
.dd-status { width: 157px; font-size: 18.400px; line-height: 25px; color: #f4f4f4; }
.dd-stop { flex: none; width: 17px; height: 18px; border-radius: 4px; background: #7e95a8; }
.dd-kebab { margin-left: 40px; flex: none; display: flex; flex-direction: column; gap: 4px; }
.dd-kebab i { width: 3px; height: 3px; border-radius: 50%; background: #7e95a8; }
.dd-vsep { margin-left: 38px; width: 1px; height: 31px; background: #30343a; }
.dd-trash { margin-left: 33px; }
.dd-vline { position: absolute; left: 487px; top: 0; width: 1px; height: 255px; background: #4a4d50; }
.dd-count { height: 50px; text-align: right; font-size: 18.200px; line-height: 56px; border-bottom: 1px solid #282c32; }
.dd-walk { margin-top: 42px; display: flex; align-items: center; justify-content: space-between; padding-right: 17px; }
.dd-walk-title { font-size: 22.600px; font-weight: 500; }
.dd-foot { position: relative; height: 28px; flex: none; display: flex; align-items: center; color: #a9b6c4; }
.dd-whale { width: 110px; height: 28px; background: #00a98b; display: flex; align-items: center; justify-content: center; }
.dd-res { margin-left: 20px; font-size: 15.500px; }
.dd-term { margin-left: 365px; }
.dd-tick { margin-left: 15px; }
.dd-ver { margin-left: 9px; font-size: 15.500px; font-weight: 700; color: #fff; }
.dd-bell { margin-left: 15px; width: 55px; height: 25px; border-radius: 13px; background: #4ba3ff; color: #0b1b2e; display: flex; align-items: center; justify-content: center; gap: 5px; font-size: 18px; }
```
